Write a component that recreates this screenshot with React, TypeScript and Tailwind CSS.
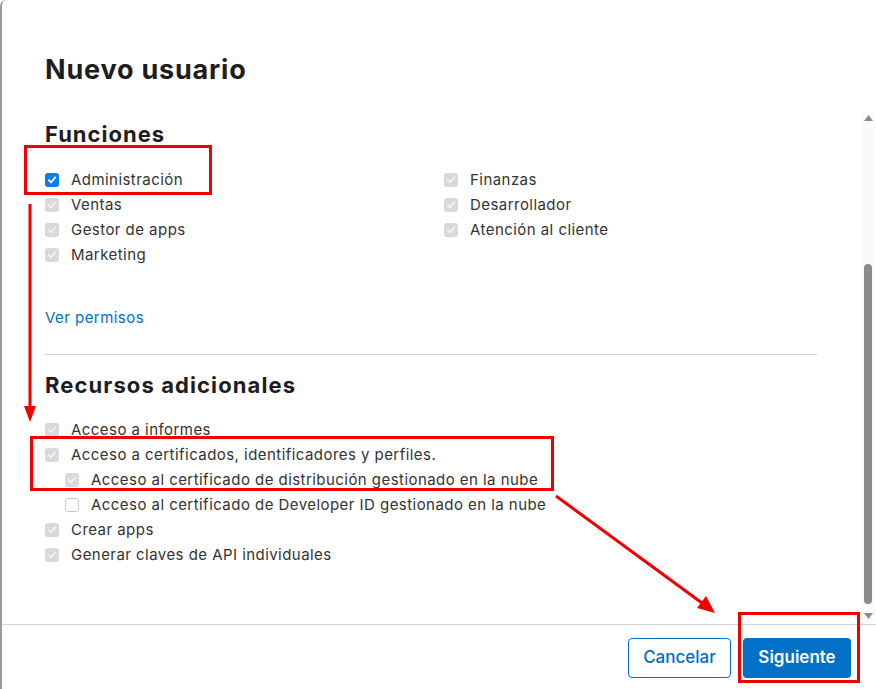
import React from "react";

type Item = { label: string; state: "on" | "locked" | "off"; nested?: boolean };

const funcLeft: Item[] = [
  { label: "Administración", state: "on" },
  { label: "Ventas", state: "locked" },
  { label: "Gestor de apps", state: "locked" },
  { label: "Marketing", state: "locked" },
];

const funcRight: Item[] = [
  { label: "Finanzas", state: "locked" },
  { label: "Desarrollador", state: "locked" },
  { label: "Atención al cliente", state: "locked" },
];

const recursos: Item[] = [
  { label: "Acceso a informes", state: "locked" },
  { label: "Acceso a certificados, identificadores y perfiles.", state: "locked" },
  { label: "Acceso al certificado de distribución gestionado en la nube", state: "locked", nested: true },
  { label: "Acceso al certificado de Developer ID gestionado en la nube", state: "off", nested: true },
  { label: "Crear apps", state: "locked" },
  { label: "Generar claves de API individuales", state: "locked" },
];

function Box({ state }: { state: Item["state"] }) {
  if (state === "off") {
    return <span className="w-[14px] h-[14px] rounded-[3px] border border-[#c9c9c9] bg-white shrink-0" />;
  }
  const bg = state === "on" ? "bg-[#0a7bf5]" : "bg-[#d9d9d9]";
  const stroke = state === "on" ? "#ffffff" : "#f2f2f2";
  return (
    <span className={`w-[14px] h-[14px] rounded-[3px] ${bg} shrink-0 flex items-center justify-center`}>
      <svg width="10" height="10" viewBox="0 0 10 10" fill="none">
        <path d="M1.8 5.2 L4 7.4 L8.3 2.4" stroke={stroke} strokeWidth="1.8" strokeLinecap="round" strokeLinejoin="round" />
      </svg>
    </span>
  );
}

function Row({ item }: { item: Item }) {
  return (
    <div className={`flex items-center h-[25px] gap-[12px] ${item.nested ? "pl-[20px]" : ""}`}>
      <Box state={item.state} />
      <span className="text-[15px] text-[#333333] leading-none tracking-[0.45px]">{item.label}</span>
    </div>
  );
}

export default function App() {
  return (
    <div
      className="relative w-[876px] h-[689px] bg-white border-l-2 border-[#9a9a9a] rounded-tl-[6px] overflow-hidden flex flex-col"
      style={{ fontFamily: "Inter, 'Liberation Sans', sans-serif" }}
    >
      {/* Header */}
      <div className="pt-[54px] pl-[43px] h-[110px] shrink-0">
        <h1 className="text-[27px] leading-[32px] font-bold text-[#1d1d1f] tracking-[0.8px]">Nuevo usuario</h1>
      </div>

      {/* Scroll area */}
      <div className="flex flex-1 min-h-0">
        <div className="w-[859px] pl-[43px] pr-[44px] pt-[10px] overflow-hidden">
          <h2 className="text-[22px] leading-[28px] font-bold text-[#1d1d1f] tracking-[1px]">Funciones</h2>
          <div className="mt-[19px] grid grid-cols-[399px_1fr]">
            <div>
              {funcLeft.map((it) => (
                <Row key={it.label} item={it} />
              ))}
            </div>
            <div>
              {funcRight.map((it) => (
                <Row key={it.label} item={it} />
              ))}
            </div>
          </div>
          <a className="block mt-[41px] text-[15px] leading-[20px] text-[#0070c9] tracking-[0.45px]">Ver permisos</a>
          <div className="mt-[26px] h-px bg-[#d2d2d2]" />
          <h2 className="mt-[16px] text-[22px] leading-[28px] font-bold text-[#1d1d1f] tracking-[1.1px]">
            Recursos adicionales
          </h2>
          <div className="mt-[18px]">
            {recursos.map((it) => (
              <Row key={it.label} item={it} />
            ))}
          </div>
        </div>
        {/* Scrollbar */}
        <div className="w-[14px] mt-[2px] mb-[2px] bg-[#fafafa] flex flex-col items-center py-[3px]">
          <svg width="9" height="6" viewBox="0 0 9 6">
            <path d="M4.5 0 L9 6 L0 6 Z" fill="#8a8a8a" />
          </svg>
          <div className="flex-1 w-full flex flex-col items-center">
            <div className="h-[143px]" />
            <div className="w-[8px] h-[340px] rounded-full bg-[#8a8a8a]" />
          </div>
          <svg width="9" height="6" viewBox="0 0 9 6">
            <path d="M0 0 L9 0 L4.5 6 Z" fill="#8a8a8a" />
          </svg>
        </div>
      </div>

      {/* Footer */}
      <div className="h-[65px] shrink-0 border-t border-[#d2d2d2] flex justify-end items-start pt-[13px] pr-[25px] gap-[12px]">
        <button className="h-[40px] w-[103px] rounded-[4px] border border-[#0070c9] text-[#0070c9] text-[17px] font-medium">
          Cancelar
        </button>
        <button className="h-[40px] w-[108px] rounded-[4px] bg-[#0070c9] text-white text-[17px] font-semibold">
          Siguiente
        </button>
      </div>

      {/* Annotations */}
      <svg className="absolute inset-0 pointer-events-none" width="876" height="689" viewBox="0 0 876 689">
        <g stroke="#f00000" strokeWidth="3" fill="none">
          <rect x="23.5" y="146.5" width="185" height="47" />
          <rect x="29.5" y="437.5" width="521" height="52" />
          <rect x="737.5" y="613.5" width="119" height="68" />
          <line x1="28" y1="204" x2="28" y2="408" />
          <line x1="554" y1="496" x2="700" y2="603" />
        </g>
        <g fill="#f00000">
          <path d="M22 406 L34 406 L28 422 Z" />
          <path d="M695 608 L704 596 L713 613 Z" />
        </g>
      </svg>
    </div>
  );
}
